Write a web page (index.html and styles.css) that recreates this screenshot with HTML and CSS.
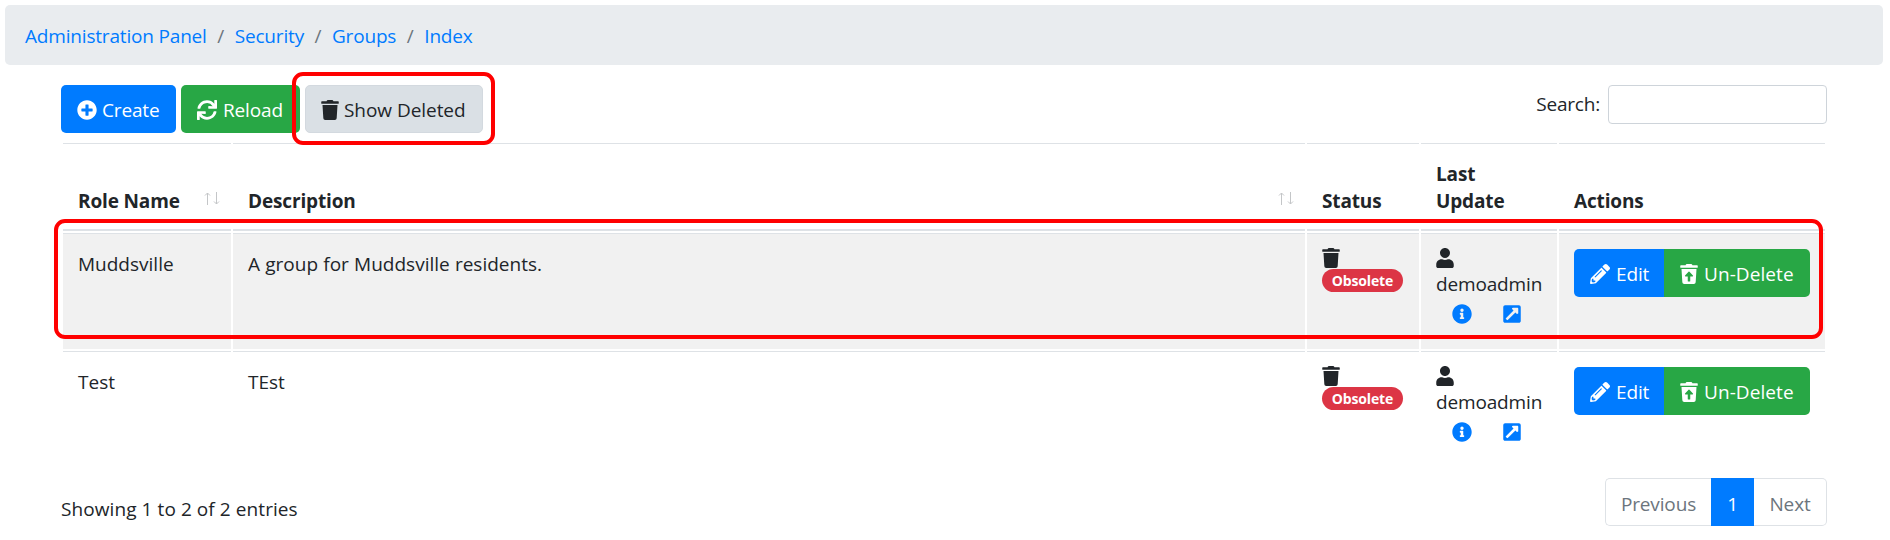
FILE: index.html
```html
<!DOCTYPE html>
<html lang="en">
<head>
<meta charset="utf-8">
<title>Groups</title>
<link rel="stylesheet" href="styles.css">
</head>
<body>
<svg class="sprite" aria-hidden="true">
  <symbol id="plus" viewBox="0 0 512 512"><path d="M256 8C119 8 8 119 8 256s111 248 248 248 248-111 248-248S393 8 256 8zm144 276c0 6.600-5.400 12-12 12h-92v92c0 6.600-5.400 12-12 12h-56c-6.600 0-12-5.400-12-12v-92h-92c-6.600 0-12-5.400-12-12v-56c0-6.600 5.400-12 12-12h92v-92c0-6.600 5.400-12 12-12h56c6.600 0 12 5.400 12 12v92h92c6.600 0 12 5.400 12 12v56z"/></symbol>
  <symbol id="sync" viewBox="0 0 512 512"><path d="M440.650 12.570l4 82.770A247.160 247.160 0 0 0 255.830 8C134.730 8 33.910 94.920 12.290 209.820A12 12 0 0 0 24.090 224h49.050a12 12 0 0 0 11.670-9.260 175.910 175.910 0 0 1 317-56.940l-101.460-4.860a12 12 0 0 0-12.570 12v47.410a12 12 0 0 0 12 12H500a12 12 0 0 0 12-12V12a12 12 0 0 0-12-12h-47.370a12 12 0 0 0-11.980 12.570zM255.830 432a175.610 175.610 0 0 1-146-77.800l101.800 4.870a12 12 0 0 0 12.570-12v-47.400a12 12 0 0 0-12-12H12a12 12 0 0 0-12 12V500a12 12 0 0 0 12 12h47.350a12 12 0 0 0 12-12.600l-4.150-82.570A247.170 247.170 0 0 0 255.830 504c121.110 0 221.930-86.920 243.550-201.820a12 12 0 0 0-11.800-14.180h-49.050a12 12 0 0 0-11.670 9.260A175.860 175.860 0 0 1 255.830 432z"/></symbol>
  <symbol id="trash" viewBox="0 0 448 512"><path d="M432 32H312l-9.400-18.700A24 24 0 0 0 281.100 0H166.800a23.720 23.720 0 0 0-21.400 13.300L136 32H16A16 16 0 0 0 0 48v32a16 16 0 0 0 16 16h416a16 16 0 0 0 16-16V48a16 16 0 0 0-16-16zM53.200 467a48 48 0 0 0 47.900 45h245.800a48 48 0 0 0 47.900-45L416 128H32z"/></symbol>
  <symbol id="restore" viewBox="0 0 448 512"><path fill-rule="evenodd" d="M53.200 467a48 48 0 0 0 47.900 45h245.800a48 48 0 0 0 47.900-45L416 128H32zm70.110-175.800l89.380-94.260a15.410 15.410 0 0 1 22.620 0l89.380 94.260c10.080 10.620 2.940 28.800-11.320 28.800H256v112a16 16 0 0 1-16 16h-32a16 16 0 0 1-16-16V320h-57.370c-14.260 0-21.400-18.180-11.320-28.800zM432 32H312l-9.400-18.700A24 24 0 0 0 281.100 0H166.800a23.720 23.720 0 0 0-21.400 13.300L136 32H16A16 16 0 0 0 0 48v32a16 16 0 0 0 16 16h416a16 16 0 0 0 16-16V48a16 16 0 0 0-16-16z"/></symbol>
  <symbol id="user" viewBox="0 0 448 512"><path d="M224 256c70.700 0 128-57.300 128-128S294.700 0 224 0 96 57.300 96 128s57.300 128 128 128zm89.600 32h-16.700c-22.200 10.200-46.900 16-72.900 16s-50.600-5.800-72.900-16h-16.700C60.200 288 0 348.200 0 422.400V464c0 26.500 21.500 48 48 48h352c26.500 0 48-21.500 48-48v-41.600c0-74.200-60.200-134.400-134.400-134.400z"/></symbol>
  <symbol id="info" viewBox="0 0 512 512"><path d="M256 8C119.043 8 8 119.083 8 256c0 136.997 111.043 248 248 248s248-111.003 248-248C504 119.083 392.957 8 256 8zm0 110c23.196 0 42 18.804 42 42s-18.804 42-42 42-42-18.804-42-42 18.804-42 42-42zm56 254c0 6.627-5.373 12-12 12h-88c-6.627 0-12-5.373-12-12v-24c0-6.627 5.373-12 12-12h12v-64h-12c-6.627 0-12-5.373-12-12v-24c0-6.627 5.373-12 12-12h64c6.627 0 12 5.373 12 12v100h12c6.627 0 12 5.373 12 12v24z"/></symbol>
  <symbol id="external" viewBox="0 0 448 512"><path d="M448 80v352c0 26.510-21.490 48-48 48H48c-26.510 0-48-21.490-48-48V80c0-26.510 21.490-48 48-48h352c26.510 0 48 21.490 48 48zm-88 16H248.029c-21.313 0-32.080 25.861-16.971 40.971l31.984 31.987L67.515 364.485c-4.686 4.686-4.686 12.284 0 16.971l31.029 31.029c4.687 4.686 12.285 4.686 16.971 0l195.526-195.526 31.988 31.991C358.058 263.977 384 253.425 384 231.979V120c0-13.255-10.745-24-24-24z"/></symbol>
  <symbol id="pencil" viewBox="0 0 512 512"><path d="M497.900 142.100l-46.100 46.100c-4.700 4.700-12.300 4.700-17 0l-111-111c-4.700-4.700-4.700-12.300 0-17l46.100-46.100c18.700-18.700 49.100-18.700 67.900 0l60.100 60.100c18.800 18.700 18.800 49.100 0 67.900zM284.200 99.800L21.600 362.400.400 483.900c-2.900 16.400 11.400 30.600 27.800 27.800l121.500-21.300 262.600-262.600c4.700-4.700 4.700-12.300 0-17l-111-111c-4.800-4.700-12.400-4.700-17.100 0zM124.100 339.900c-5.500-5.500-5.500-14.300 0-19.800l154-154c5.500-5.500 14.300-5.500 19.800 0s5.500 14.300 0 19.800l-154 154c-5.500 5.500-14.300 5.500-19.800 0zM88 424h48v36.300l-64.500 11.300-31.100-31.100L51.700 376H88v48z"/></symbol>
</svg>

<nav class="breadcrumb">
  <a class="crumb">Administration Panel</a><span class="slash">/</span>
  <a class="crumb">Security</a><span class="slash">/</span>
  <a class="crumb">Groups</a><span class="slash">/</span>
  <a class="crumb">Index</a>
</nav>

<main class="content">
  <div class="toolbar">
    <div class="buttons">
      <button class="btn create"><svg class="icon"><use href="#plus"/></svg><span>Create</span></button>
      <button class="btn reload"><svg class="icon"><use href="#sync"/></svg><span>Reload</span></button>
      <div class="deleted">
        <button class="btn show"><svg class="icon narrow"><use href="#trash"/></svg><span>Show Deleted</span></button>
        <div class="mark mark-button"></div>
      </div>
    </div>
    <label class="search"><span>Search:</span><input type="text"></label>
  </div>

  <div class="table-wrap">
    <table class="grid">
      <colgroup><col class="c1"><col class="c2"><col class="c3"><col class="c4"><col class="c5"></colgroup>
      <thead>
        <tr>
          <th><div class="sortable"><span>Role Name</span><svg class="sort" viewBox="0 0 16 14"><path d="M3.500 13V1M1 3.500L3.500 1 6 3.500M12.500 0v12M10 9.500l2.500 2.500L15 9.500"/></svg></div></th>
          <th><div class="sortable"><span>Description</span><svg class="sort" viewBox="0 0 16 14"><path d="M3.500 13V1M1 3.500L3.500 1 6 3.500M12.500 0v12M10 9.500l2.500 2.500L15 9.500"/></svg></div></th>
          <th>Status</th>
          <th>Last<br>Update</th>
          <th>Actions</th>
        </tr>
      </thead>
      <tbody>
        <tr class="odd">
          <td>Muddsville</td>
          <td>A group for Muddsville residents.</td>
          <td><div class="status"><svg class="icon narrow"><use href="#trash"/></svg><span class="badge">Obsolete</span></div></td>
          <td><div class="updated"><svg class="icon narrow"><use href="#user"/></svg><span class="who">demoadmin</span><div class="links"><svg class="icon"><use href="#info"/></svg><svg class="icon narrow"><use href="#external"/></svg></div></div></td>
          <td><div class="group"><button class="btn edit"><svg class="icon"><use href="#pencil"/></svg><span>Edit</span></button><button class="btn restore"><svg class="icon narrow"><use href="#restore"/></svg><span>Un-Delete</span></button></div></td>
        </tr>
        <tr>
          <td>Test</td>
          <td>TEst</td>
          <td><div class="status"><svg class="icon narrow"><use href="#trash"/></svg><span class="badge">Obsolete</span></div></td>
          <td><div class="updated"><svg class="icon narrow"><use href="#user"/></svg><span class="who">demoadmin</span><div class="links"><svg class="icon"><use href="#info"/></svg><svg class="icon narrow"><use href="#external"/></svg></div></div></td>
          <td><div class="group"><button class="btn edit"><svg class="icon"><use href="#pencil"/></svg><span>Edit</span></button><button class="btn restore"><svg class="icon narrow"><use href="#restore"/></svg><span>Un-Delete</span></button></div></td>
        </tr>
      </tbody>
    </table>
    <div class="mark mark-row"></div>
  </div>

  <div class="footer">
    <span class="summary">Showing 1 to 2 of 2 entries</span>
    <div class="pages"><span class="page prev">Previous</span><span class="page current">1</span><span class="page next">Next</span></div>
  </div>
</main>
</body>
</html>
```
FILE: styles.css
```css
* { box-sizing: border-box; }

body {
  margin: 0;
  padding: 5px 7px 0 5px;
  height: 540px;
  overflow: hidden;
  background: #fff;
  color: #212529;
  font: 19px/27px "Open Sans", "Noto Sans", sans-serif;
  letter-spacing: -0.15px;
}

.sprite { position: absolute; width: 0; height: 0; }

.icon { display: block; flex: none; width: 20px; height: 20px; fill: currentColor; }
.icon.narrow { width: 18px; }

.breadcrumb {
  display: flex;
  align-items: center;
  height: 60px;
  padding: 2px 20px 0;
  border-radius: 5px;
  background: #e9ecef;
  letter-spacing: -0.18px;
}
.crumb { color: #007bff; }
.slash { width: 28px; text-align: center; color: #6c757d; }

.content { padding: 20px 56px 0; }

.toolbar { display: flex; justify-content: space-between; height: 58px; }
.buttons { display: flex; gap: 5px; }
.deleted { position: relative; height: 48px; }

.btn {
  display: flex;
  align-items: center;
  gap: 5px;
  height: 48px;
  margin: 0;
  padding: 2px 0 0 16px;
  border: 0;
  border-radius: 5px;
  color: #fff;
  font: inherit;
  letter-spacing: inherit;
  white-space: nowrap;
}
.create { width: 115px; background: #007bff; }
.reload { width: 119px; gap: 6px; background: #28a745; }
.show { width: 178px; padding-left: 15px; border: 1px solid #d3d9df; background: #dae0e5; color: #212529; letter-spacing: -0.05px; }

.mark { position: absolute; z-index: 2; border: 4px solid #f00; border-radius: 11px; pointer-events: none; }
.mark-button { left: -13px; top: -13px; width: 203px; height: 73px; }
.mark-row { left: -8px; top: 76px; width: 1769px; height: 120px; }
.mark-row { left: -7px; top: 78px; width: 1769px; height: 120px; }

.search { display: flex; align-items: center; gap: 8px; height: 39px; letter-spacing: -0.2px; }
.search input { width: 219px; height: 39px; border: 1px solid #ced4da; border-radius: 4px; background: #fff; }

.table-wrap { position: relative; }
.grid { width: 1766px; table-layout: fixed; border-collapse: separate; border-spacing: 2px 2px; margin-top: -2px; }
.c1 { width: 168px; }
.c2 { width: 1072px; }
.c3 { width: 112px; }
.c4 { width: 136px; }
.c5 { width: 266px; }
th, td { padding: 14px 0 0 15px; border-top: 1px solid #dee2e6; text-align: left; vertical-align: top; }
th { height: 88px; padding: 0 0 14px 15px; border-bottom: 2px solid #dee2e6; vertical-align: bottom; }
td { height: 116px; }
td:nth-child(1), td:nth-child(2) { padding-top: 17px; letter-spacing: 0; word-spacing: 0.3px; }
.odd td { background: #f1f1f1; }

.sortable { display: flex; align-items: center; justify-content: space-between; padding-right: 11px; }
.sort { width: 16px; height: 14px; margin-top: -6px; fill: none; stroke: #c4c6c8; stroke-width: 1; }

.badge {
  display: block;
  width: 81px;
  height: 23px;
  margin-top: 1px;
  border-radius: 12px;
  background: #dc3545;
  color: #fff;
  font-size: 14px;
  font-weight: 700;
  line-height: 23px;
  text-align: center;
}
.who { display: block; margin-top: 3px; }
.links { display: flex; align-items: center; gap: 31px; padding: 6px 0 0 16px; color: #007bff; }

.group { display: flex; margin-top: 1px; }
.edit { width: 90px; gap: 6px; border-radius: 5px 0 0 5px; background: #007bff; }
.restore { width: 146px; gap: 6px; border-radius: 0 5px 5px 0; background: #28a745; letter-spacing: 0.08px; }

.footer { display: flex; justify-content: space-between; margin-top: 9px; }
.summary { margin-top: 18px; letter-spacing: 0.08px; }
.pages { display: flex; height: 48px; }
.page { padding-top: 12px; border: 1px solid #dee2e6; text-align: center; color: #6c757d; }
.prev { width: 106px; border-right: 0; border-radius: 5px 0 0 5px; }
.current { width: 43px; border-color: #007bff; background: #007bff; color: #fff; }
.next { width: 73px; border-left: 0; border-radius: 0 5px 5px 0; }
```
